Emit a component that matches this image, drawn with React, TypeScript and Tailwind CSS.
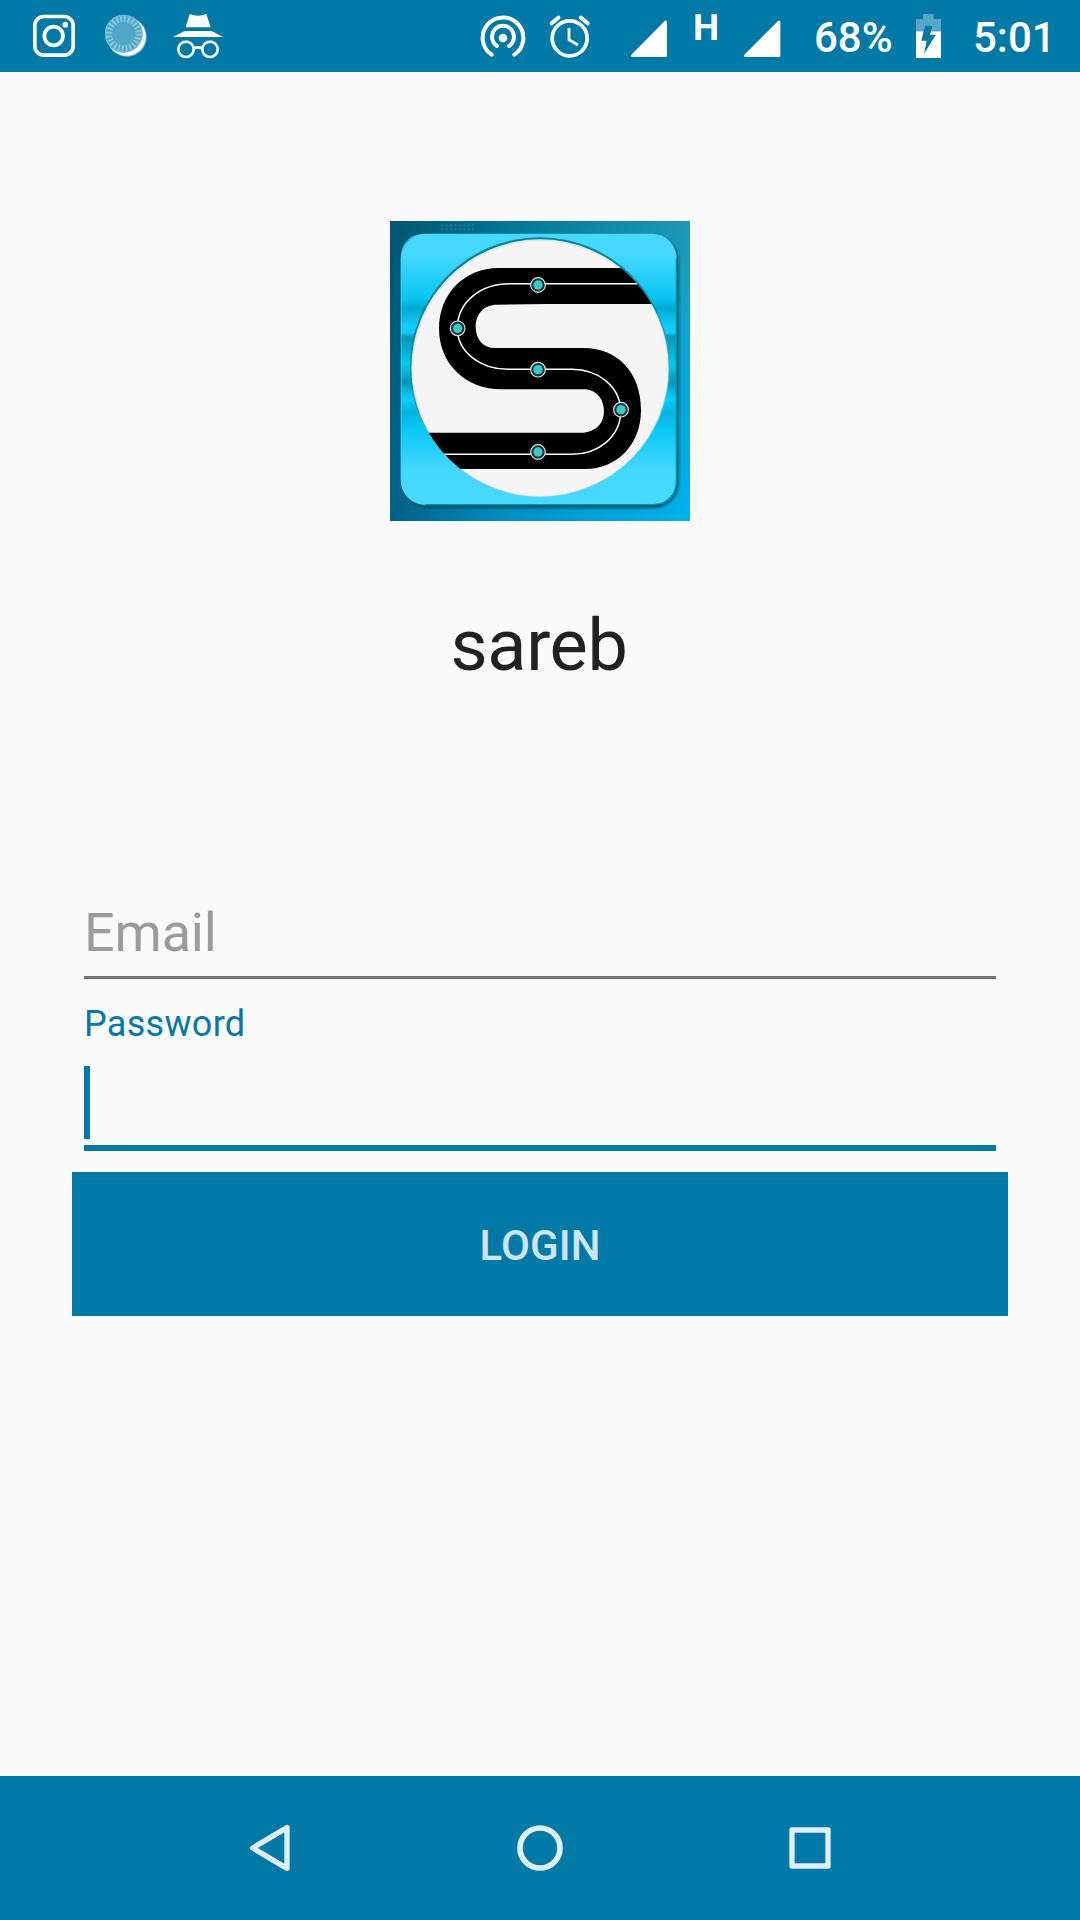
const stops = [
  [474, 225],
  [233, 355],
  [474, 479],
  [723, 599],
  [474, 726],
];

function Logo() {
  return (
    <svg className="block h-[300px] w-[300px]" viewBox="30 33 900 900">
      <defs>
        <linearGradient id="back" x1="0" y1="0" x2="1" y2="0">
          <stop offset="0" stopColor="#006189" />
          <stop offset="0.4" stopColor="#0091c4" />
          <stop offset="1" stopColor="#00b2ee" />
        </linearGradient>
        <linearGradient id="backTop" x1="0" y1="0" x2="1" y2="0">
          <stop offset="0" stopColor="#005670" />
          <stop offset="0.5" stopColor="#047d9b" />
          <stop offset="1" stopColor="#1f98b5" />
        </linearGradient>
        <linearGradient id="backFade" x1="0" y1="0" x2="0" y2="1">
          <stop offset="0" stopColor="#fff" />
          <stop offset="0.45" stopColor="#fff" stopOpacity="0.5" />
          <stop offset="1" stopColor="#fff" stopOpacity="0" />
        </linearGradient>
        <mask id="topMask">
          <rect x="30" y="33" width="900" height="900" fill="url(#backFade)" />
        </mask>
        <linearGradient id="plate" x1="0" y1="72" x2="0" y2="884" gradientUnits="userSpaceOnUse">
          <stop offset="0" stopColor="#47d8ff" />
          <stop offset="0.08" stopColor="#45d8ff" />
          <stop offset="0.24" stopColor="#08c5f2" />
          <stop offset="0.275" stopColor="#00a9d2" />
          <stop offset="0.34" stopColor="#14cdfa" />
          <stop offset="0.365" stopColor="#12c8f5" />
          <stop offset="0.38" stopColor="#0295b5" />
          <stop offset="0.42" stopColor="#04a8cd" />
          <stop offset="0.48" stopColor="#02c9ee" />
          <stop offset="0.55" stopColor="#0295b5" />
          <stop offset="0.575" stopColor="#06b4dc" />
          <stop offset="0.61" stopColor="#0cccf8" />
          <stop offset="0.66" stopColor="#02b4df" />
          <stop offset="0.73" stopColor="#0cc9f6" />
          <stop offset="0.87" stopColor="#42d7fe" />
          <stop offset="1" stopColor="#47d9ff" />
        </linearGradient>
        <linearGradient id="ring" x1="0" y1="0" x2="0.3" y2="1">
          <stop offset="0" stopColor="#007f90" />
          <stop offset="0.5" stopColor="#078ba5" />
          <stop offset="0.8" stopColor="#3cc5e2" />
          <stop offset="1" stopColor="#6bd3ea" />
        </linearGradient>
        <pattern id="dots" width="13" height="13" patternUnits="userSpaceOnUse">
          <rect x="3" y="3" width="6" height="6" fill="#2487a1" />
        </pattern>
        <filter id="soft" x="-10%" y="-10%" width="120%" height="120%">
          <feGaussianBlur stdDeviation="4" />
        </filter>
        <clipPath id="disc">
          <circle cx="480" cy="474" r="386" />
        </clipPath>
      </defs>
      <rect x="30" y="33" width="900" height="900" fill="url(#back)" />
      <rect x="30" y="33" width="900" height="900" fill="url(#backTop)" mask="url(#topMask)" />
      <rect x="182" y="36" width="102" height="32" fill="url(#dots)" opacity="0.6" />
      <rect x="64" y="78" width="832" height="816" rx="74" fill="#005268" filter="url(#soft)" />
      <rect x="62" y="71" width="828" height="814" rx="74" fill="url(#plate)" />
      <path d="M64 800V146Q64 73 136 73" fill="none" stroke="#4acce8" strokeWidth="3" opacity="0.7" />
      <path d="M889 146V811Q889 884 816 884H136" fill="none" stroke="#0894ad" strokeWidth="4" />
      <circle cx="479.5" cy="471.5" r="390" fill="url(#ring)" />
      <circle cx="480" cy="474" r="386" fill="#dfebed" />
      <circle cx="481" cy="476" r="382" fill="#f5f5f5" />
      <g clipPath="url(#disc)">
        <path
          fill="#000"
          d="M900 174H355C255 174 177 250 177 356C177 458 255 538 365 538H618C650 541 672 568 672 604C672 638 650 664 612 668H60V777H615C710 777 783 705 783 600C783 490 715 414 610 414H345C310 414 287 388 287 350C287 312 312 284 350 284L500 282H900Z"
        />
        <path
          d="M900 221.5H390C300 221.5 232 277 232 355C232 425 300 478 385 478H575C655 478 722 530 722 604C722 680 655 733 575 733H60"
          fill="none"
          stroke="#fff"
          strokeWidth="4.5"
        />
      </g>
      {stops.map(([x, y]) => (
        <g key={`${x}-${y}`} transform={`translate(${x} ${y})`}>
          <circle r="22" fill="#17343a" stroke="#e9e3e3" strokeWidth="3.5" />
          <circle r="14" fill="#3bc8c8" />
        </g>
      ))}
    </svg>
  );
}

function StatusBar() {
  return (
    <div className="flex h-[72px] w-full shrink-0 bg-[#0079a6] text-[42px] leading-[75px] font-medium text-white">
      {/* notifications */}
      <svg className="ml-[33px] h-[72px] w-[42px] shrink-0" viewBox="99 0 126 216" fill="none" stroke="#fff">
        <rect x="104.5" y="49.5" width="115" height="116" rx="27" strokeWidth="11" />
        <circle cx="161" cy="108" r="28" strokeWidth="11" />
        <circle cx="196" cy="74" r="8.5" fill="#fff" stroke="none" />
      </svg>
      <svg className="ml-[30px] h-[72px] w-[43px] shrink-0" viewBox="315 0 129 216">
        <defs>
          <filter id="glow" x="-20%" y="-20%" width="140%" height="140%">
            <feGaussianBlur stdDeviation="2" />
          </filter>
        </defs>
        <circle cx="381" cy="111" r="59" fill="#8cc5dc" filter="url(#glow)" />
        <circle cx="379" cy="109" r="58" fill="#fff" filter="url(#glow)" />
        <circle cx="371" cy="101" r="57" fill="#55a9c9" />
        <circle cx="371" cy="101" r="45" fill="none" stroke="#8fc9dd" strokeWidth="20" strokeDasharray="5 6.78" />
        <circle cx="371" cy="101" r="55" fill="none" stroke="#72b9d3" strokeWidth="3" />
        <circle cx="371" cy="101" r="34" fill="#4fa8c9" />
      </svg>
      <svg className="ml-[25px] h-[72px] w-[50px] shrink-0" viewBox="519 0 150 216" fill="#fff">
        <path d="M569 42Q594 52 619 42L632 82H557Z" />
        <path d="M554 93H635L669 111H519Z" />
        <g fill="none" stroke="#fff" strokeWidth="8">
          <circle cx="558" cy="148" r="23" />
          <circle cx="630" cy="148" r="23" />
          <path d="M581 145Q594 139 607 145" />
        </g>
      </svg>

      {/* system icons */}
      <svg className="ml-[257px] h-[72px] w-[46px] shrink-0" viewBox="60 0 138 216" fill="none" stroke="#fff" strokeWidth="12" strokeLinecap="round">
        <circle cx="129" cy="114" r="13" fill="#fff" stroke="none" />
        <path d="M111 138A33 33 0 1 1 147 138" />
        <path d="M95 164A61 61 0 1 1 163 164" />
      </svg>
      <svg className="ml-[23px] h-[72px] w-[42px] shrink-0" viewBox="267 0 126 216" fill="none" stroke="#fff">
        <circle cx="329" cy="115" r="52.5" strokeWidth="11" />
        <path d="M275 70L295 53M383 70L363 53" strokeWidth="12" strokeLinecap="round" />
        <path d="M327 84V119L354 135" strokeWidth="8.5" />
      </svg>
      <svg className="ml-[39px] h-[72px] w-[38px] shrink-0" viewBox="510 0 114 216" fill="#fff" stroke="#fff" strokeWidth="8" strokeLinejoin="round">
        <path d="M517 167L617 66V167Z" />
      </svg>
      <span className="ml-[25px] w-[28px] shrink-0 text-[37px] leading-[56px] font-bold">H</span>
      <svg className="ml-[22px] h-[72px] w-[38px] shrink-0" viewBox="849 0 114 216" fill="#fff" stroke="#fff" strokeWidth="8" strokeLinejoin="round">
        <path d="M856 167L957 66V167Z" />
      </svg>
      <span className="ml-[33px] w-[80px] shrink-0">68%</span>
      <svg className="ml-[22px] h-[72px] w-[25px] shrink-0" viewBox="408 0 75 216">
        <path d="M408 94V57H429V42H461V57H483V94Z" fill="#56a7c6" />
        <path d="M408 94H483V174H408Z" fill="#fff" />
        <path d="M435 77H457L450 105H467L432 162L440 122H424Z" fill="#0079a6" />
      </svg>
      <span className="ml-[32px] shrink-0">5:01</span>
    </div>
  );
}

function NavBar() {
  return (
    <div className="flex h-36 w-full shrink-0 items-center justify-center gap-[210px] bg-[#0079a6]">
      <svg className="h-[66px] w-[60px]" viewBox="0 0 180 198" fill="none" stroke="#e0f0fa" strokeWidth="16" strokeLinejoin="round">
        <path d="M38 99L141 38V160Z" />
      </svg>
      <svg className="h-[66px] w-[60px]" viewBox="0 0 180 198" fill="none" stroke="#e0f0fa" strokeWidth="17">
        <circle cx="90" cy="99" r="60" />
      </svg>
      <svg className="h-[66px] w-[60px]" viewBox="0 0 180 198" fill="none" stroke="#e0f0fa" strokeWidth="16" strokeLinejoin="round">
        <rect x="36" y="45" width="108" height="108" />
      </svg>
    </div>
  );
}

export default function App() {
  return (
    <div className="flex h-[1920px] w-[1080px] flex-col overflow-hidden bg-[#fafafa] font-['Roboto',sans-serif]">
      <StatusBar />
      <div className="flex flex-1 flex-col px-[72px]">
        <div className="mt-[149px] flex justify-center">
          <Logo />
        </div>
        <h1 className="mt-[83px] pr-[2px] text-center text-[72px] leading-[84px] tracking-[-0.3px] text-[#212121]">sareb</h1>
        <div className="mx-3 mt-[213px] h-[78px] border-b-3 border-[#737373] text-[54px] leading-[64px] tracking-[-0.2px] text-[#9b9b9b]">
          Email
        </div>
        <label className="mx-3 mt-6 text-[36px] leading-[42px] tracking-[0.3px] text-[#0079a6]">Password</label>
        <div className="mx-3 mt-[21px] h-[85px] border-b-6 border-[#0079a6]">
          <div className="h-[73px] w-1.5 bg-[#0079a6]" />
        </div>
        <button className="mt-[21px] h-36 bg-[#0079a6] pt-[3px] text-[42px] font-medium tracking-[0.1px] text-[#cce6f1]">LOGIN</button>
      </div>
      <NavBar />
    </div>
  );
}
